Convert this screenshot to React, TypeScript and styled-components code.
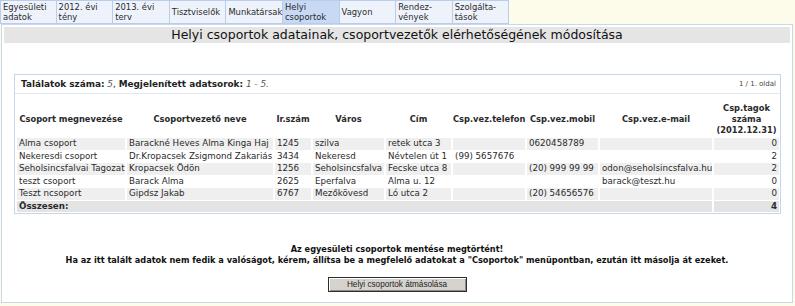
import React from "react";
import styled, { createGlobalStyle } from "styled-components";

const GlobalStyle = createGlobalStyle`
  html, body { margin: 0; padding: 0; background: #fdfbe9; }
  body { font-family: "DejaVu Sans", Verdana, sans-serif; color: #222; }
`;

const Page = styled.div`
  width: 795px;
  height: 306px;
  overflow: hidden;
`;

const TabBar = styled.nav`
  display: flex;
  height: 24px;
`;

const Tab = styled.div<{ $active?: boolean }>`
  width: 56.6px;
  box-sizing: border-box;
  border: 1px solid #b9cceb;
  border-left-width: 0;
  background: ${(p) => (p.$active ? "#c7d9f5" : "#eef3fb")};
  font-size: 8.4px;
  line-height: 10px;
  padding: 0 2px;
  display: flex;
  align-items: center;
  color: #2a2a2a;
  &:first-child { border-left-width: 1px; }
`;

const Frame = styled.main`
  margin-left: 1px;
  width: 792px;
  height: 279px;
  box-sizing: border-box;
  border: 1px solid #c6d7ee;
  background: #fff;
  padding: 2px;
  display: flex;
  flex-direction: column;
`;

const Title = styled.h1`
  margin: 0;
  height: 16px;
  line-height: 16px;
  background: #e5e5e5;
  font-size: 12.5px;
  font-weight: normal;
  text-align: center;
  color: #111;
`;

const Panel = styled.section`
  margin: 31px 9px 0 10px;
  border: 1px solid #c5d6ed;
`;

const InfoRow = styled.div`
  height: 18px;
  display: flex;
  align-items: center;
  justify-content: space-between;
  padding: 0 4px 0 6px;
  border-bottom: 1px solid #dfe7f3;
  font-size: 8.9px;
`;

const Label = styled.b`
  font-weight: bold;
`;

const Value = styled.i`
  color: #555;
`;

const PageInfo = styled.span`
  font-size: 7px;
  color: #444;
`;

const Table = styled.table`
  margin-top: 5px;
  width: 766px;
  table-layout: fixed;
  border-collapse: separate;
  border-spacing: 2px 1px;
  font-size: 8.7px;
  color: #2a2a2a;
`;

const Th = styled.th`
  height: 35px;
  padding: 0;
  font-size: 8.3px;
  font-weight: bold;
  text-align: center;
  vertical-align: middle;
  line-height: 11px;
  white-space: nowrap;
  padding-top: 2px;
`;

const Tr = styled.tr<{ $shade?: boolean }>`
  td { background: ${(p) => (p.$shade ? "#efefef" : "#fff")}; }
`;

const Td = styled.td<{ $right?: boolean }>`
  height: 11.5px;
  line-height: 11.5px;
  padding: 0 2px;
  white-space: nowrap;
  overflow: hidden;
  text-align: ${(p) => (p.$right ? "right" : "left")};
`;

const TotalTd = styled.td<{ $right?: boolean }>`
  height: 11.5px;
  line-height: 11.5px;
  padding: 0 2px;
  background: #e3e3e3;
  font-weight: bold;
  text-align: ${(p) => (p.$right ? "right" : "left")};
`;

const Message = styled.div`
  margin-top: 30px;
  text-align: center;
  font-weight: bold;
  font-size: 8.2px;
  line-height: 11px;
  color: #111;
`;

const CopyButton = styled.button`
  align-self: center;
  margin-top: 11px;
  width: 139px;
  height: 15px;
  padding: 0;
  background: #d6d3ce;
  border: 1px solid #2e2e2e;
  box-shadow: inset 1px 1px 0 #fff, inset -1px -1px 0 #8c8a86;
  font-family: "Liberation Sans", Arial, sans-serif;
  font-size: 8.2px;
  color: #222;
`;

const tabLabels: React.ReactNode[] = [
  <>Egyesületi<br />adatok</>,
  <>2012. évi<br />tény</>,
  <>2013. évi<br />terv</>,
  <>Tisztviselők</>,
  <>Munkatársak</>,
  <>Helyi<br />csoportok</>,
  <>Vagyon</>,
  <>Rendez-<br />vények</>,
  <>Szolgálta-<br />tások</>,
];

const cols = [108, 146, 36, 71, 65, 72, 71, 112, 65];

const rows = [
  ["Alma csoport", "Barackné Heves Alma Kinga Haj", "1245", "szilva", "retek utca 3", "", "0620458789", "", "0"],
  ["Nekeresdi csoport", "Dr.Kropacsek Zsigmond Zakariás", "3434", "Nekeresd", "Névtelen út 1", "(99) 5657676", "", "", "2"],
  ["Seholsincsfalvai Tagozat", "Kropacsek Ödön", "1256", "Seholsincsfalva", "Fecske utca 8", "", "(20) 999 99 99", "odon@seholsincsfalva.hu", "2"],
  ["teszt csoport", "Barack Alma", "2625", "Eperfalva", "Alma u. 12", "", "", "barack@teszt.hu", "0"],
  ["Teszt ncsoport", "Gipdsz Jakab", "6767", "Mezőkövesd", "Ló utca 2", "", "(20) 54656576", "", "0"],
];

export default function App() {
  return (
    <Page>
      <GlobalStyle />
      <TabBar>
        {tabLabels.map((t, i) => (
          <Tab key={i} $active={i === 5}>
            <span>{t}</span>
          </Tab>
        ))}
      </TabBar>
      <Frame>
        <Title>Helyi csoportok adatainak, csoportvezetők elérhetőségének módosítása</Title>
        <Panel>
          <InfoRow>
            <span>
              <Label>Találatok száma:</Label> <Value>5</Value>, <Label>Megjelenített adatsorok:</Label>{" "}
              <Value>1 - 5.</Value>
            </span>
            <PageInfo>1 / 1. oldal</PageInfo>
          </InfoRow>
          <Table>
            <colgroup>
              {cols.map((w, i) => (
                <col key={i} style={{ width: w }} />
              ))}
            </colgroup>
            <thead>
              <tr>
                <Th>Csoport megnevezése</Th>
                <Th>Csoportvezető neve</Th>
                <Th>Ir.szám</Th>
                <Th>Város</Th>
                <Th>Cím</Th>
                <Th>Csp.vez.telefon</Th>
                <Th>Csp.vez.mobil</Th>
                <Th>Csp.vez.e-mail</Th>
                <Th>
                  Csp.tagok
                  <br />
                  száma
                  <br />
                  (2012.12.31)
                </Th>
              </tr>
            </thead>
            <tbody>
              {rows.map((r, i) => (
                <Tr key={i} $shade={i % 2 === 0}>
                  {r.map((c, j) => (
                    <Td key={j} $right={j === 8}>
                      {c}
                    </Td>
                  ))}
                </Tr>
              ))}
              <tr>
                <TotalTd colSpan={8}>Összesen:</TotalTd>
                <TotalTd $right>4</TotalTd>
              </tr>
            </tbody>
          </Table>
        </Panel>
        <Message>
          Az egyesületi csoportok mentése megtörtént!
          <br />
          Ha az itt talált adatok nem fedik a valóságot, kérem, állítsa be a megfelelő adatokat a "Csoportok" menüpontban, ezután itt másolja át ezeket.
        </Message>
        <CopyButton>Helyi csoportok átmásolása</CopyButton>
      </Frame>
    </Page>
  );
}
